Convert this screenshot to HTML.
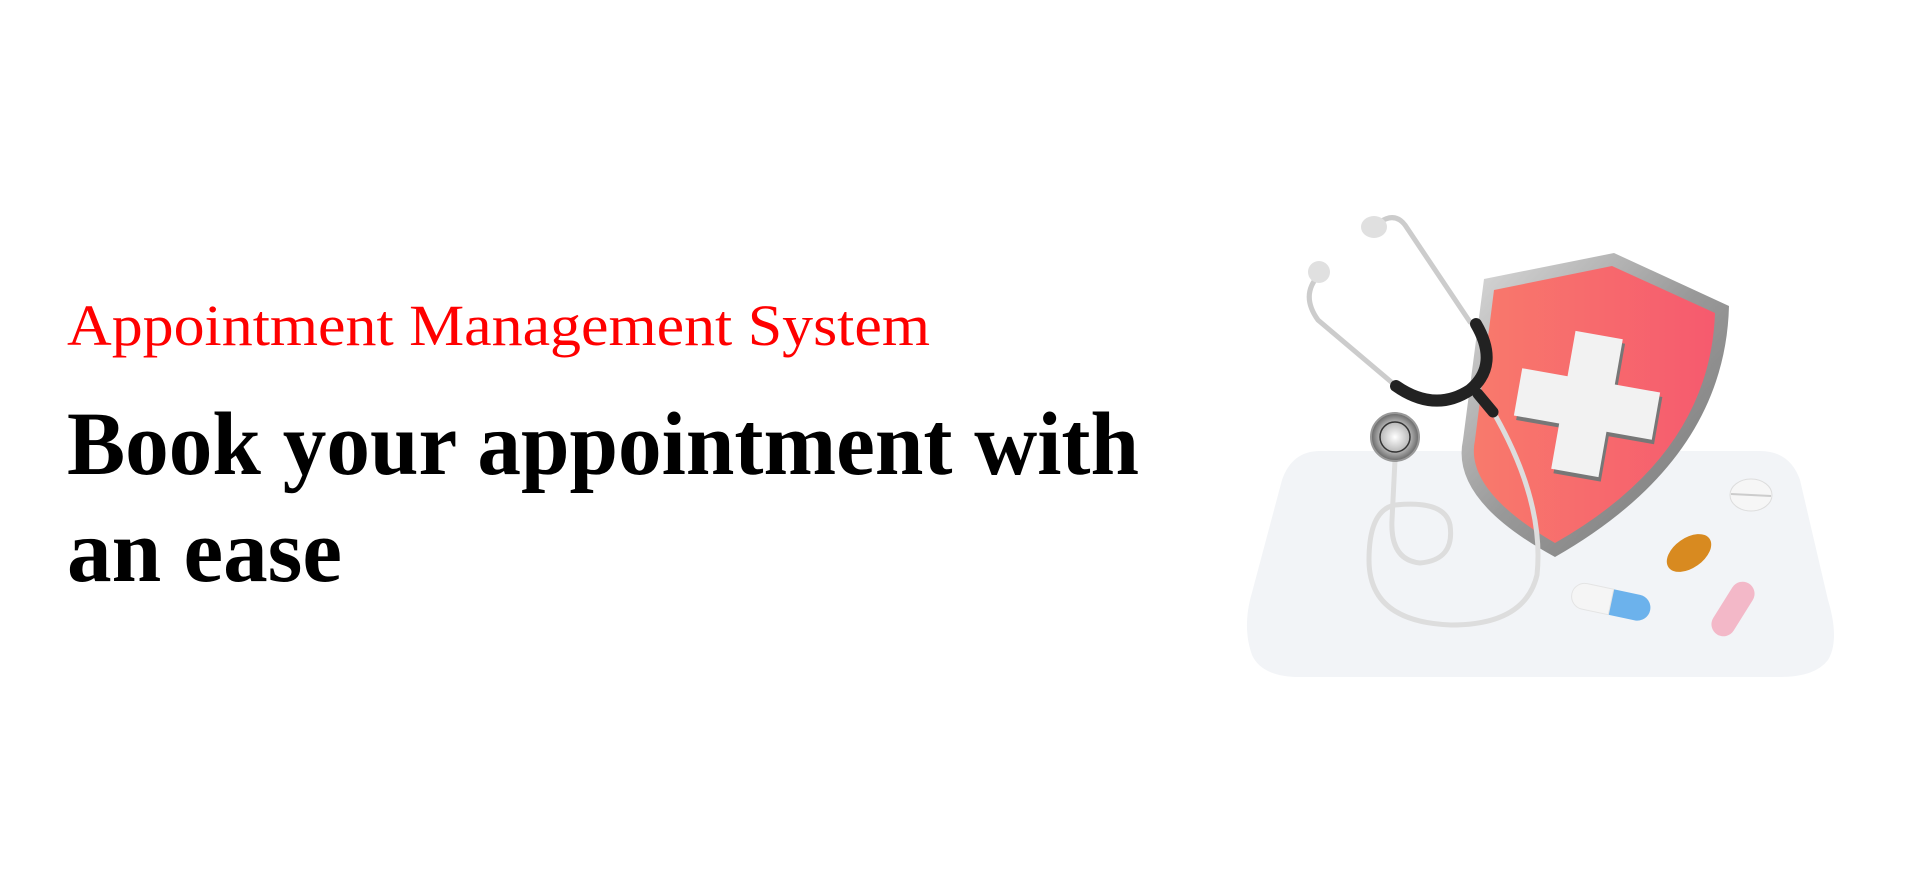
<!DOCTYPE html>
<html><head><meta charset="utf-8"><style>
html,body{margin:0;padding:0;background:#fff;width:1920px;height:887px;overflow:hidden;position:relative}
.t{position:absolute;left:67px;white-space:nowrap;font-family:"Liberation Serif",serif;transform-origin:0 0}
#s{color:#f00;font-size:58px;top:292px}
#h1,#h2{color:#000;font-weight:bold;font-size:90px}
#h1{top:393px}#h2{top:500px}
svg{position:absolute;left:0;top:0}
</style></head><body>
<div class="t" id="s">Appointment Management System</div>
<div class="t" id="h1">Book your appointment with</div>
<div class="t" id="h2">an ease</div>
<svg width="1920" height="887" viewBox="0 0 1920 887">
<defs>
<linearGradient id="sh" x1="0" x2="1" y1="0" y2="0"><stop offset="0" stop-color="#f87a6c"/><stop offset="1" stop-color="#f65a6e"/></linearGradient>
<linearGradient id="rim" x1="0" x2="1" y1="0" y2="1"><stop offset="0" stop-color="#ddd"/><stop offset=".5" stop-color="#999"/><stop offset="1" stop-color="#777"/></linearGradient>
<radialGradient id="cp"><stop offset="0" stop-color="#fff"/><stop offset=".6" stop-color="#bbb"/><stop offset="1" stop-color="#666"/></radialGradient>
</defs>
<path d="M1320 451 L1760 451 Q1790 451 1800 480 L1828 600 Q1840 640 1828 660 Q1815 677 1780 677 L1300 677 Q1262 677 1252 655 Q1243 630 1250 600 L1282 480 Q1292 451 1320 451 Z" fill="#f2f4f7"/>
<!-- shield -->
<path d="M1484 279 L1614 253 L1729 306 Q1725 460 1555 557 Q1450 500 1463 440 Z" fill="url(#rim)"/>
<path d="M1494 290 L1612 266 L1715 313 Q1710 455 1555 543 Q1464 490 1475 440 Z" fill="url(#sh)"/>
<g transform="translate(1587 404) rotate(10)">
<path d="M-24 -70 H24 V-24 H70 V24 H24 V70 H-24 V24 H-70 V-24 H-24 Z" fill="#777" transform="translate(3 4)"/>
<path d="M-24 -70 H24 V-24 H70 V24 H24 V70 H-24 V24 H-70 V-24 H-24 Z" fill="#f2f2f2"/>
</g>
<!-- stethoscope -->
<g fill="none" stroke-linecap="round">
<path d="M1380 222 Q1395 212 1405 225 L1470 322" stroke="#ccc" stroke-width="5"/>
<path d="M1319 275 Q1300 295 1318 320 L1396 386" stroke="#ccc" stroke-width="5"/>
<path d="M1491 408 Q1545 500 1537 575 Q1525 625 1451 625 Q1369 622 1369 560 Q1369 510 1395 505 Q1445 500 1450 525 Q1455 560 1420 563 Q1390 560 1392 520 L1395 460" stroke="#ddd" stroke-width="5"/>
<path d="M1476 324 Q1500 365 1470 390 Q1435 413 1396 386" stroke="#222" stroke-width="12"/>
<path d="M1478 394 L1493 412" stroke="#222" stroke-width="11"/>
</g>
<circle cx="1395" cy="437" r="24" fill="url(#cp)" stroke="#999" stroke-width="2"/>
<circle cx="1395" cy="437" r="15" fill="none" stroke="#333" stroke-width="1.5"/>
<ellipse cx="1374" cy="227" rx="13" ry="11" fill="#e0e0e0"/>
<ellipse cx="1319" cy="272" rx="11" ry="11" fill="#e0e0e0"/>
<!-- pills -->
<ellipse cx="1751" cy="495" rx="21" ry="16" fill="#f6f6f6" stroke="#ddd"/>
<line x1="1731" y1="494" x2="1771" y2="496" stroke="#ccc" stroke-width="2"/>
<ellipse cx="1689" cy="553" rx="25" ry="15" fill="#d88a20" transform="rotate(-35 1689 553)"/>
<g transform="rotate(12 1611 602)"><rect x="1571" y="589" width="80" height="26" rx="13" fill="#6cb2ec"/><path d="M1584 589 H1611 V615 H1584 A13 13 0 0 1 1584 589 Z" fill="#f5f5f5" stroke="#e4e4e4"/></g>
<g transform="rotate(-58 1733 609)"><rect x="1703" y="597" width="60" height="24" rx="12" fill="#f3b8c8"/></g>
</svg>
<script>
function fit(id,w){var e=document.getElementById(id);var r=e.getBoundingClientRect().width;e.style.transform='scaleX('+(w/r)+')';}
fit('s',863);fit('h1',1072);fit('h2',275);
</script>
</body></html>
